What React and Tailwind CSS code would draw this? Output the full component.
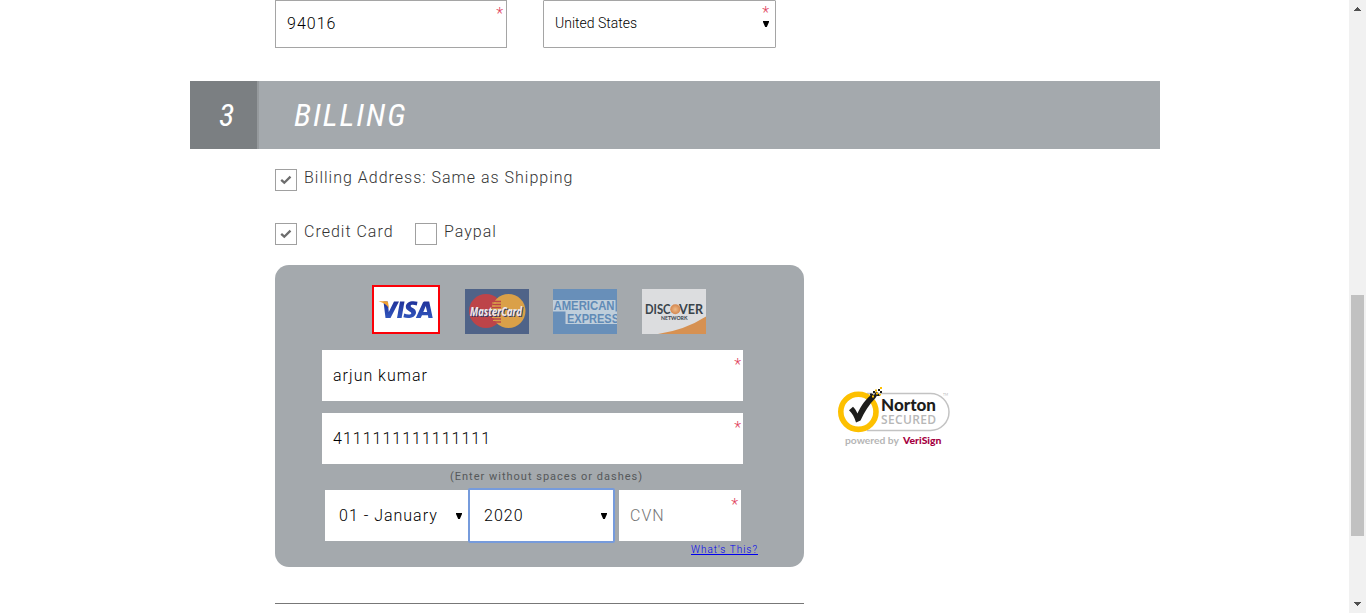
import React from "react";

function Star({ className }) {
  return (
    <span className={`absolute text-[16px] leading-4 font-light text-[#e0405a] ${className}`}>*</span>
  );
}

function Arrow({ className = "" }) {
  return (
    <svg className={`shrink-0 ${className}`} width="6" height="6" viewBox="0 0 6 6">
      <path d="M0 0H6V1L3.8 6H2.2L0 1Z" fill="#000" />
    </svg>
  );
}

function Check({ checked, label, className = "" }) {
  return (
    <label className={`flex h-[22px] ${className}`}>
      <span className="flex size-[22px] shrink-0 items-center justify-center border border-[#a0a0a0] bg-white">
        {checked && (
          <svg width="12" height="10" viewBox="0 0 12 10">
            <path d="M1.2 4.8L4.3 7.7L10.5 1.6" fill="none" stroke="#6d6d6d" strokeWidth="2.3" />
          </svg>
        )}
      </span>
      <span className="ml-[7px] whitespace-nowrap text-[16px] leading-[18px] font-light tracking-[1px] text-[#333]">
        {label}
      </span>
    </label>
  );
}

function Visa() {
  return (
    <div className="h-[49px] w-[68px] border-2 border-[#fb0007] bg-white">
      <svg width="64" height="45" viewBox="0 0 64 45">
        <defs>
          <linearGradient id="visaBlue" x1="0" y1="0" x2="0" y2="1">
            <stop offset="0" stopColor="#20329a" />
            <stop offset="1" stopColor="#3156bd" />
          </linearGradient>
        </defs>
        <g fill="url(#visaBlue)">
          <path d="M9.5 14.5H13.7L14.8 25L20 14.5H25L16.5 31H11.5Z" />
          <path d="M26 14.5H30.5L27.6 31H23Z" />
          <path d="M43.5 14.8L42.8 18.5C39 17.2 36.6 17.7 36.6 19C36.6 20.7 42 21.2 42 25.4C42 30.2 35 32.3 29.4 30.2L30.2 26.5C33.7 28.1 37.3 27.7 37.3 26.2C37.3 24.3 31.8 24 31.8 19.8C31.8 15 37.7 13 43.5 14.8Z" />
          <path fillRule="evenodd" d="M50.6 14.5H55.2L58.7 31H54.4L53.9 28.3H48L46.7 31H41.8L48.7 16C49.1 15 49.8 14.5 50.6 14.5ZM51.7 19L49.3 25H53.2Z" />
        </g>
        <path d="M4.5 14.2H12C13.4 14.2 14 14.8 14.2 16L14.9 21.5C13.2 17.5 9.6 15.5 4.5 14.2Z" fill="#f2a12f" />
      </svg>
    </div>
  );
}

function MasterCard() {
  return (
    <svg width="64" height="45" viewBox="0 0 64 45">
      <rect width="64" height="45" fill="#4f6388" />
      <circle cx="21" cy="22" r="17" fill="#bd4449" />
      <circle cx="43.5" cy="22" r="17" fill="#daa048" />
      <path d="M29 12.5H36M28 15.5H36M27 18.5H36M27 27H36M28 30H36M30 33H36" stroke="#bd4449" strokeWidth="1.3" />
      <path d="M31 14H27M30 17H27M31 28.5H27M32 31.5H28" stroke="#daa048" strokeWidth="1" />
      <text x="6" y="28.2" textLength="52" lengthAdjust="spacingAndGlyphs" fontFamily="Open Sans, sans-serif" fontSize="12.5" fontWeight="700" fontStyle="italic" fill="#343d67">MasterCard</text>
      <text x="5" y="27.3" textLength="52" lengthAdjust="spacingAndGlyphs" fontFamily="Open Sans, sans-serif" fontSize="12.5" fontWeight="700" fontStyle="italic" fill="#eceaf0">MasterCard</text>
    </svg>
  );
}

function Amex() {
  return (
    <svg width="64" height="45" viewBox="0 0 64 45">
      <rect width="64" height="45" fill="#688fb9" />
      <path d="M0 11H62.5V22.5H64V35H12.5V22.5H0Z" fill="#bfcedb" />
      <g fontFamily="Liberation Sans, sans-serif" fontWeight="700" fill="#608ab6">
        <text x="0.5" y="21.4" fontSize="13" textLength="61" lengthAdjust="spacingAndGlyphs">AMERICAN</text>
        <text x="14" y="33.5" fontSize="13" textLength="52" lengthAdjust="spacingAndGlyphs">EXPRESS</text>
      </g>
    </svg>
  );
}

function Discover() {
  return (
    <svg width="64" height="45" viewBox="0 0 64 45">
      <defs>
        <radialGradient id="discoverO">
          <stop offset="0" stopColor="#edba87" />
          <stop offset="1" stopColor="#d5874f" />
        </radialGradient>
      </defs>
      <rect width="64" height="45" fill="#dcdddf" />
      <path d="M16 45Q43 41 64 27.5V45Z" fill="#d69152" />
      <g fontFamily="Lato, sans-serif" fill="#39434a">
        <text x="3" y="25" fontSize="13" fontWeight="700" textLength="25.5" lengthAdjust="spacingAndGlyphs">DISC</text>
        <text x="37" y="25" fontSize="13" fontWeight="700" textLength="24" lengthAdjust="spacingAndGlyphs">VER</text>
        <text x="19" y="31" fontSize="5.2" fontWeight="700" textLength="26.5">NETWORK</text>
      </g>
      <circle cx="33.3" cy="20.3" r="5" fill="url(#discoverO)" />
    </svg>
  );
}

function Norton() {
  return (
    <svg width="114" height="64" viewBox="0 0 114 64">
      <path d="M30 7.5H93.5A18.3 18.3 0 0 1 93.5 44.5H30" fill="#fff" stroke="#c3c3c3" strokeWidth="1.5" />
      <circle cx="21.4" cy="25.8" r="17.6" fill="#fff" stroke="#fdc000" strokeWidth="5.6" />
      <path d="M12 24.2L16 20.8C18 22.6 19.2 24.8 20.4 27.5C24.5 19 29 13 35.5 7.8L37 9L39 5.5L41.5 7L38.5 12C32 18.5 27.5 26 23.5 34.5L19 36.5C17.5 31 15.3 27.5 12 24.2Z" fill="#1d1d1b" />
      <path d="M36 5H38V7H36ZM41 3H43V5H41ZM43 5H45V7H43ZM40 8H43V10H40ZM33 7.5H35V9.5H33Z" fill="#1d1d1b" />
      <path d="M38 3.5H40V5.5H38ZM43 1H45V3H43ZM39 6.5H41V8.5H39ZM35 9.5H37V11.5H35ZM42 8H44V9.5H42Z" fill="#fdc000" />
      <text x="44" y="25" textLength="55" lengthAdjust="spacingAndGlyphs" fontFamily="Lato, sans-serif" fontSize="17.3" fontWeight="900" fill="#1d1d1b">Norton</text>
      <text x="44" y="38.4" textLength="55" lengthAdjust="spacing" fontFamily="Open Sans, sans-serif" fontSize="12" fontWeight="600" fill="#b7b7b7">SECURED</text>
      <text x="106" y="10" textLength="5" lengthAdjust="spacingAndGlyphs" fontFamily="Lato, sans-serif" fontSize="4" fill="#888">TM</text>
      <text x="8" y="57.8" textLength="54" lengthAdjust="spacingAndGlyphs" fontFamily="Lato, sans-serif" fontSize="9.5" fontWeight="700" fill="#b5b5b5">powered by</text>
      <text x="66" y="57.8" textLength="38.5" lengthAdjust="spacingAndGlyphs" fontFamily="Lato, sans-serif" fontSize="9.5" fontWeight="900" fill="#a5003f">VeriSign</text>
    </svg>
  );
}

function Scrollbar() {
  return (
    <div className="flex w-[17px] shrink-0 flex-col items-center bg-[#f1f1f1] pt-[7px] pb-1">
      <svg width="7" height="4" viewBox="0 0 7 4"><path d="M3 0H4V1H5V2H6V3H7V4H0V3H1V2H2V1H3Z" fill="#505050" /></svg>
      <div className="mt-[284px] h-[241px] w-[13px] bg-[#c1c1c1]" />
      <svg className="mt-auto mb-[3px]" width="7" height="4" viewBox="0 0 7 4"><path d="M0 0H7V1H6V2H5V3H4V4H3V3H2V2H1V1H0Z" fill="#505050" /></svg>
    </div>
  );
}

export default function App() {
  return (
    <div className="flex h-[613px] w-[1366px] overflow-hidden bg-white font-['Roboto',sans-serif] font-light text-black">
      <main className="flex-1 pl-[190px]">
        <div className="flex gap-9 pl-[85px]">
          <div className="relative flex h-12 w-[232px] items-center border border-[#a5a5a5] pl-[11px] text-[16px] tracking-[1px]">
            94016
            <Star className="top-[5px] right-[2px]" />
          </div>
          <div className="relative flex h-12 w-[233px] items-center justify-between rounded-[1px] border border-[#a5a5a5] pr-[6px] pl-[11px] text-[14px]">
            <span className="-mt-px">United States</span>
            <Arrow />
            <Star className="top-[4px] right-[6px]" />
          </div>
        </div>

        <div className="mt-[33px] flex h-[68px] w-[970px] items-center bg-[#a4a9ad] font-['Roboto_Condensed','Roboto',sans-serif] text-[32px] leading-[68px] font-normal text-white italic">
          <div className="h-[68px] w-[69px] border-r-2 border-[#969a9d] bg-[#7b7f82] pl-[29px]">
            <span className="inline-block">3</span>
          </div>
          <h2 className="ml-[35px] tracking-[2px]">BILLING</h2>
        </div>

        <section className="pl-[85px]">
          <Check checked label="Billing Address: Same as Shipping" className="mt-5" />
          <div className="mt-8 flex">
            <Check checked label="Credit Card" className="w-[140px]" />
            <Check label="Paypal" />
          </div>

          <div className="mt-5 flex">
            <div className="h-[302px] w-[529px] rounded-[14px] bg-[#a4a9ad] pt-5 pl-[47px]">
              <div className="flex items-end pl-[50px]">
                <Visa />
                <div className="ml-[25px]"><MasterCard /></div>
                <div className="ml-6"><Amex /></div>
                <div className="ml-[25px]"><Discover /></div>
              </div>
              <div className="relative mt-4 flex h-[51px] w-[421px] items-center bg-white pl-[11px] text-[16px] tracking-[1px]">
                arjun kumar
                <Star className="top-[7px] right-[1px]" />
              </div>
              <div className="relative mt-3 flex h-[51px] w-[421px] items-center bg-white pl-[11px] text-[16px] tracking-[1px]">
                4111111111111111
                <Star className="top-[7px] right-[1px]" />
              </div>
              <p className="h-[24px] pt-[6px] pl-[128px] text-[11px] leading-[14px] font-normal tracking-[1px] text-[#55585a]">
                (Enter without spaces or dashes)
              </p>
              <div className="flex items-center pl-[3px] text-[16px] tracking-[1px]">
                <div className="flex h-[51px] w-[143px] items-center justify-between bg-white pr-[6px] pl-[14px]">
                  01 - January
                  <Arrow />
                </div>
                <div className="flex h-[55px] w-[147px] items-center justify-between rounded-[2px] border-2 border-[#769bdc] bg-white pr-[6px] pl-[14px]">
                  2020
                  <Arrow />
                </div>
                <div className="relative ml-1 flex h-[51px] w-[122px] items-center bg-white pl-[11px] text-[#757575]">
                  CVN
                  <Star className="top-[7px] right-[2px]" />
                </div>
              </div>
              <a className="ml-[369px] block w-fit text-[10px] leading-[14px] tracking-[1px] whitespace-nowrap text-[#0000ee] underline">
                What's This?
              </a>
            </div>
            <div className="mt-[121px] ml-[33px]"><Norton /></div>
          </div>
          <hr className="mt-9 w-[529px] border-t border-[#777]" />
        </section>
      </main>
      <Scrollbar />
    </div>
  );
}
